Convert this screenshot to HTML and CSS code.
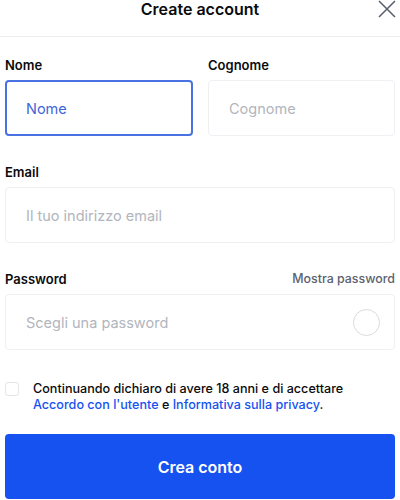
FILE: index.html
```html
<!DOCTYPE html>
<html lang="it">
<head>
<meta charset="utf-8">
<title>Create account</title>
<link rel="stylesheet" href="styles.css">
</head>
<body>
<div class="page">
  <header class="header">
    <h1 class="title">Create account</h1>
    <button class="close" aria-label="Close">
      <svg width="18" height="18" viewBox="0 0 18 18"><path d="M1 1L17 17M17 1L1 17" stroke="#5b616e" stroke-width="1.6" fill="none"/></svg>
    </button>
  </header>
  <form class="form">
    <div class="row">
      <div class="field">
        <label class="label">Nome</label>
        <input class="input focused" placeholder="Nome">
      </div>
      <div class="field">
        <label class="label">Cognome</label>
        <input class="input" placeholder="Cognome">
      </div>
    </div>
    <div class="field">
      <label class="label">Email</label>
      <input class="input" placeholder="Il tuo indirizzo email">
    </div>
    <div class="field">
      <div class="label-row">
        <label class="label">Password</label>
        <span class="show">Mostra password</span>
      </div>
      <div class="input-box">
        <input class="input-bare" placeholder="Scegli una password">
        <span class="strength"></span>
      </div>
    </div>
    <div class="terms">
      <span class="checkbox"></span>
      <p class="terms-text">Continuando dichiaro di avere 18 anni e di accettare <a class="link">Accordo con l'utente</a> e <a class="link">Informativa sulla privacy</a>.</p>
    </div>
    <button class="submit" type="button">Crea conto</button>
  </form>
</div>
</body>
</html>
```
FILE: styles.css
```css
* { box-sizing: border-box; }
body {
  margin: 0;
  background: #fff;
  font-family: Inter, "Noto Sans", sans-serif;
  color: #0a0b0d;
}
.page { width: 400px; }
.header {
  height: 37px;
  padding-top: 1px;
  border-bottom: 1px solid #eceef1;
  display: flex;
  justify-content: center;
  align-items: flex-start;
  position: relative;
}
.title {
  margin: 0;
  font-size: 16px;
  line-height: 16px;
  font-weight: 600;
  color: #0a0b0d;
}
.close {
  position: absolute;
  right: 4px;
  top: 0;
  padding: 0;
  border: 0;
  background: none;
  width: 18px;
  height: 18px;
}
.close svg { display: block; }
.form {
  padding: 20px 5px 0;
  display: flex;
  flex-direction: column;
  gap: 28px;
}
.row {
  display: grid;
  grid-template-columns: 188px 187px;
  gap: 15px;
}
.field {
  display: flex;
  flex-direction: column;
  gap: 7px;
}
.label {
  font-size: 13px;
  line-height: 16px;
  font-weight: 600;
  color: #0a0b0d;
}
.label-row {
  display: flex;
  justify-content: space-between;
  align-items: center;
}
.show {
  font-size: 12.4px;
  line-height: 16px;
  font-weight: 500;
  color: #5b616e;
}
.input, .input-box {
  height: 56px;
  width: 100%;
  border: 1px solid #eef0f3;
  border-radius: 4px;
  padding: 0 20px;
  font-family: inherit;
  font-size: 14.5px;
  background: #fff;
  outline: none;
}
.input::placeholder, .input-bare::placeholder { color: #b1b5bd; }
.input.focused {
  border: 2px solid #4a72e2;
  padding: 0 19px;
}
.input.focused::placeholder { color: #3f66d9; }
.input-box {
  display: flex;
  align-items: center;
  padding: 0 14px 0 20px;
}
.input-bare {
  flex: 1;
  min-width: 0;
  border: 0;
  outline: none;
  padding: 0;
  font-family: inherit;
  font-size: 14.5px;
  background: transparent;
}
.strength {
  width: 27px;
  height: 27px;
  border: 1.5px solid #d8dade;
  border-radius: 50%;
  flex: none;
}
.terms {
  display: flex;
  align-items: flex-start;
  gap: 14px;
  margin-top: 3px;
}
.checkbox {
  width: 14px;
  height: 14px;
  margin-top: 1px;
  border: 1px solid #e3e5e8;
  border-radius: 3px;
  flex: none;
}
.terms-text {
  margin: 0;
  font-size: 12.6px;
  line-height: 16px;
  font-weight: 500;
  color: #0a0b0d;
}
.link { color: #1652f0; text-decoration: none; }
.submit {
  margin-top: -7px;
  height: 65px;
  width: 100%;
  border: 0;
  border-radius: 4px;
  background: #1652f0;
  color: #fff;
  font-family: inherit;
  font-size: 16px;
  font-weight: 600;
}
```
